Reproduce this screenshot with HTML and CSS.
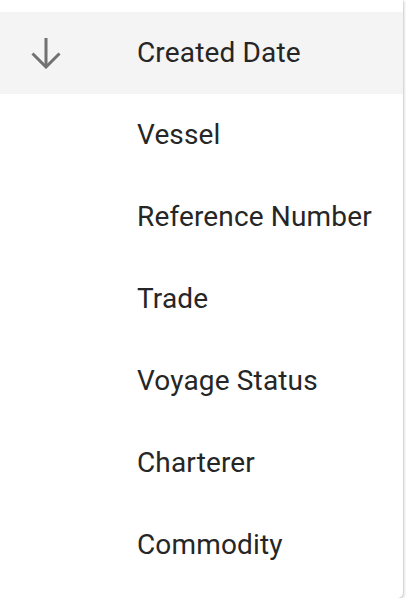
FILE: index.html
```html
<!DOCTYPE html>
<html>
<head>
<meta charset="utf-8">
<link rel="stylesheet" href="styles.css">
</head>
<body>
<div class="menu">
  <div class="item active">
    <span class="icon-cell">
      <svg width="30" height="32" viewBox="0 0 30 32" fill="none" stroke="#717171" stroke-width="3" stroke-linecap="butt" stroke-linejoin="miter">
        <path d="M15 1V30"/>
        <path d="M1.5 16.5L15 30L28.5 16.5"/>
      </svg>
    </span>
    <span class="label">Created Date</span>
  </div>
  <div class="item"><span class="icon-cell"></span><span class="label">Vessel</span></div>
  <div class="item"><span class="icon-cell"></span><span class="label">Reference Number</span></div>
  <div class="item"><span class="icon-cell"></span><span class="label">Trade</span></div>
  <div class="item"><span class="icon-cell"></span><span class="label">Voyage Status</span></div>
  <div class="item"><span class="icon-cell"></span><span class="label">Charterer</span></div>
  <div class="item"><span class="icon-cell"></span><span class="label">Commodity</span></div>
</div>
</body>
</html>
```
FILE: styles.css
```css
html, body {
  margin: 0;
  padding: 0;
  background: #ffffff;
}
body {
  font-family: Roboto, "Noto Sans", sans-serif;
}
.menu {
  width: 403px;
  padding: 12px 0 12px 0;
  background: #ffffff;
  border-radius: 0 0 5px 0;
  box-shadow: 1px 1px 3px rgba(0, 0, 0, 0.22), 0 0 1px rgba(0, 0, 0, 0.12);
}
.item {
  height: 82px;
  display: flex;
  align-items: center;
}
.item.active {
  background: #f4f4f4;
}
.icon-cell {
  width: 92px;
  display: flex;
  justify-content: center;
  align-items: center;
  flex: none;
}
.label {
  margin-left: 45px;
  font-size: 28px;
  letter-spacing: 0.15px;
  color: #262626;
  line-height: 1;
}
```
